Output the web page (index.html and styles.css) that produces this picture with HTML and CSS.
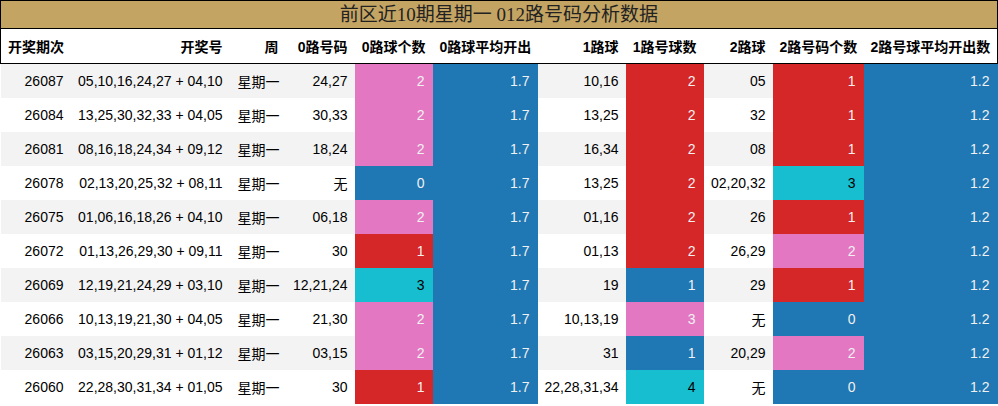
FILE: index.html
```html
<!DOCTYPE html>
<html lang="zh">
<head>
<meta charset="utf-8">
<title>前区近10期星期一 012路号码分析数据</title>
<link rel="stylesheet" href="styles.css">
</head>
<body>
<div class="title">前区近10期星期一 012路号码分析数据</div>
<table class="grid">
  <colgroup>
    <col class="w70"><col class="w159"><col class="w56"><col class="w69"><col class="w78"><col class="w105"><col class="w88"><col class="w78"><col class="w69"><col class="w91"><col class="w133">
  </colgroup>
  <thead>
    <tr>
      <th class="left">开奖期次</th><th>开奖号</th><th>周</th><th>0路号码</th><th>0路球个数</th><th>0路球平均开出</th><th>1路球</th><th>1路号球数</th><th>2路球</th><th>2路号码个数</th><th>2路号球平均开出数</th>
    </tr>
  </thead>
  <tbody>
    <tr><td>26087</td><td>05,10,16,24,27 + 04,10</td><td class="l">星期一</td><td>24,27</td><td class="pk">2</td><td class="bl">1.7</td><td>10,16</td><td class="rd">2</td><td>05</td><td class="rd">1</td><td class="bl">1.2</td></tr>
    <tr><td>26084</td><td>13,25,30,32,33 + 04,05</td><td class="l">星期一</td><td>30,33</td><td class="pk">2</td><td class="bl">1.7</td><td>13,25</td><td class="rd">2</td><td>32</td><td class="rd">1</td><td class="bl">1.2</td></tr>
    <tr><td>26081</td><td>08,16,18,24,34 + 09,12</td><td class="l">星期一</td><td>18,24</td><td class="pk">2</td><td class="bl">1.7</td><td>16,34</td><td class="rd">2</td><td>08</td><td class="rd">1</td><td class="bl">1.2</td></tr>
    <tr><td>26078</td><td>02,13,20,25,32 + 08,11</td><td class="l">星期一</td><td>无</td><td class="bl">0</td><td class="bl">1.7</td><td>13,25</td><td class="rd">2</td><td>02,20,32</td><td class="cy">3</td><td class="bl">1.2</td></tr>
    <tr><td>26075</td><td>01,06,16,18,26 + 04,10</td><td class="l">星期一</td><td>06,18</td><td class="pk">2</td><td class="bl">1.7</td><td>01,16</td><td class="rd">2</td><td>26</td><td class="rd">1</td><td class="bl">1.2</td></tr>
    <tr><td>26072</td><td>01,13,26,29,30 + 09,11</td><td class="l">星期一</td><td>30</td><td class="rd">1</td><td class="bl">1.7</td><td>01,13</td><td class="rd">2</td><td>26,29</td><td class="pk">2</td><td class="bl">1.2</td></tr>
    <tr><td>26069</td><td>12,19,21,24,29 + 03,10</td><td class="l">星期一</td><td>12,21,24</td><td class="cy">3</td><td class="bl">1.7</td><td>19</td><td class="bl">1</td><td>29</td><td class="rd">1</td><td class="bl">1.2</td></tr>
    <tr><td>26066</td><td>10,13,19,21,30 + 04,05</td><td class="l">星期一</td><td>21,30</td><td class="pk">2</td><td class="bl">1.7</td><td>10,13,19</td><td class="pk">3</td><td>无</td><td class="bl">0</td><td class="bl">1.2</td></tr>
    <tr><td>26063</td><td>03,15,20,29,31 + 01,12</td><td class="l">星期一</td><td>03,15</td><td class="pk">2</td><td class="bl">1.7</td><td>31</td><td class="bl">1</td><td>20,29</td><td class="pk">2</td><td class="bl">1.2</td></tr>
    <tr><td>26060</td><td>22,28,30,31,34 + 01,05</td><td class="l">星期一</td><td>30</td><td class="rd">1</td><td class="bl">1.7</td><td>22,28,31,34</td><td class="cy">4</td><td>无</td><td class="bl">0</td><td class="bl">1.2</td></tr>
  </tbody>
</table>
</body>
</html>
```

FILE: styles.css
```css
html, body {
  margin: 0;
  padding: 0;
  background: #ffffff;
}
body {
  width: 998px;
  font-family: "Liberation Sans", "Noto Sans CJK SC", sans-serif;
  color: #000;
}
.title {
  box-sizing: border-box;
  height: 29px;
  border: 1px solid #000;
  background: #c4a463;
  color: #222;
  text-align: center;
  font-family: "Liberation Serif", "Noto Sans CJK SC", serif;
  font-size: 19px;
  line-height: 28px;
}
.grid {
  width: 998px;
  table-layout: fixed;
  border-collapse: collapse;
  font-size: 14px;
}
.w70 { width: 70px; }
.w159 { width: 159px; }
.w56 { width: 56px; }
.w69 { width: 69px; }
.w78 { width: 78px; }
.w105 { width: 105px; }
.w88 { width: 88px; }
.w91 { width: 91px; }
.w133 { width: 134px; }
.grid th {
  height: 34px;
  padding: 0 7px;
  text-align: right;
  font-weight: bold;
  white-space: nowrap;
  border-bottom: 1px solid #000;
  background: #fff;
}
.grid thead tr {
  border-left: 1px solid #000;
  border-right: 1px solid #000;
}
.grid th.left {
  text-align: left;
}
.grid td {
  height: 34px;
  padding: 0 7px 0 0;
  text-align: right;
  white-space: nowrap;
  box-sizing: border-box;
}
.grid td.l {
  text-align: left;
  padding-left: 8px;
}
.grid tbody tr:nth-child(odd) {
  background: #f3f3f3;
}
.grid tbody tr:nth-child(even) {
  background: #ffffff;
}
.grid td.pk { background: #e377c2; color: #f1f1f1; padding-right: 8px; }
.grid td.bl { background: #1f77b4; color: #f1f1f1; padding-right: 8px; }
.grid td.rd { background: #d62728; color: #f1f1f1; padding-right: 8px; }
.grid td.cy { background: #17becf; color: #000; padding-right: 8px; }
```
